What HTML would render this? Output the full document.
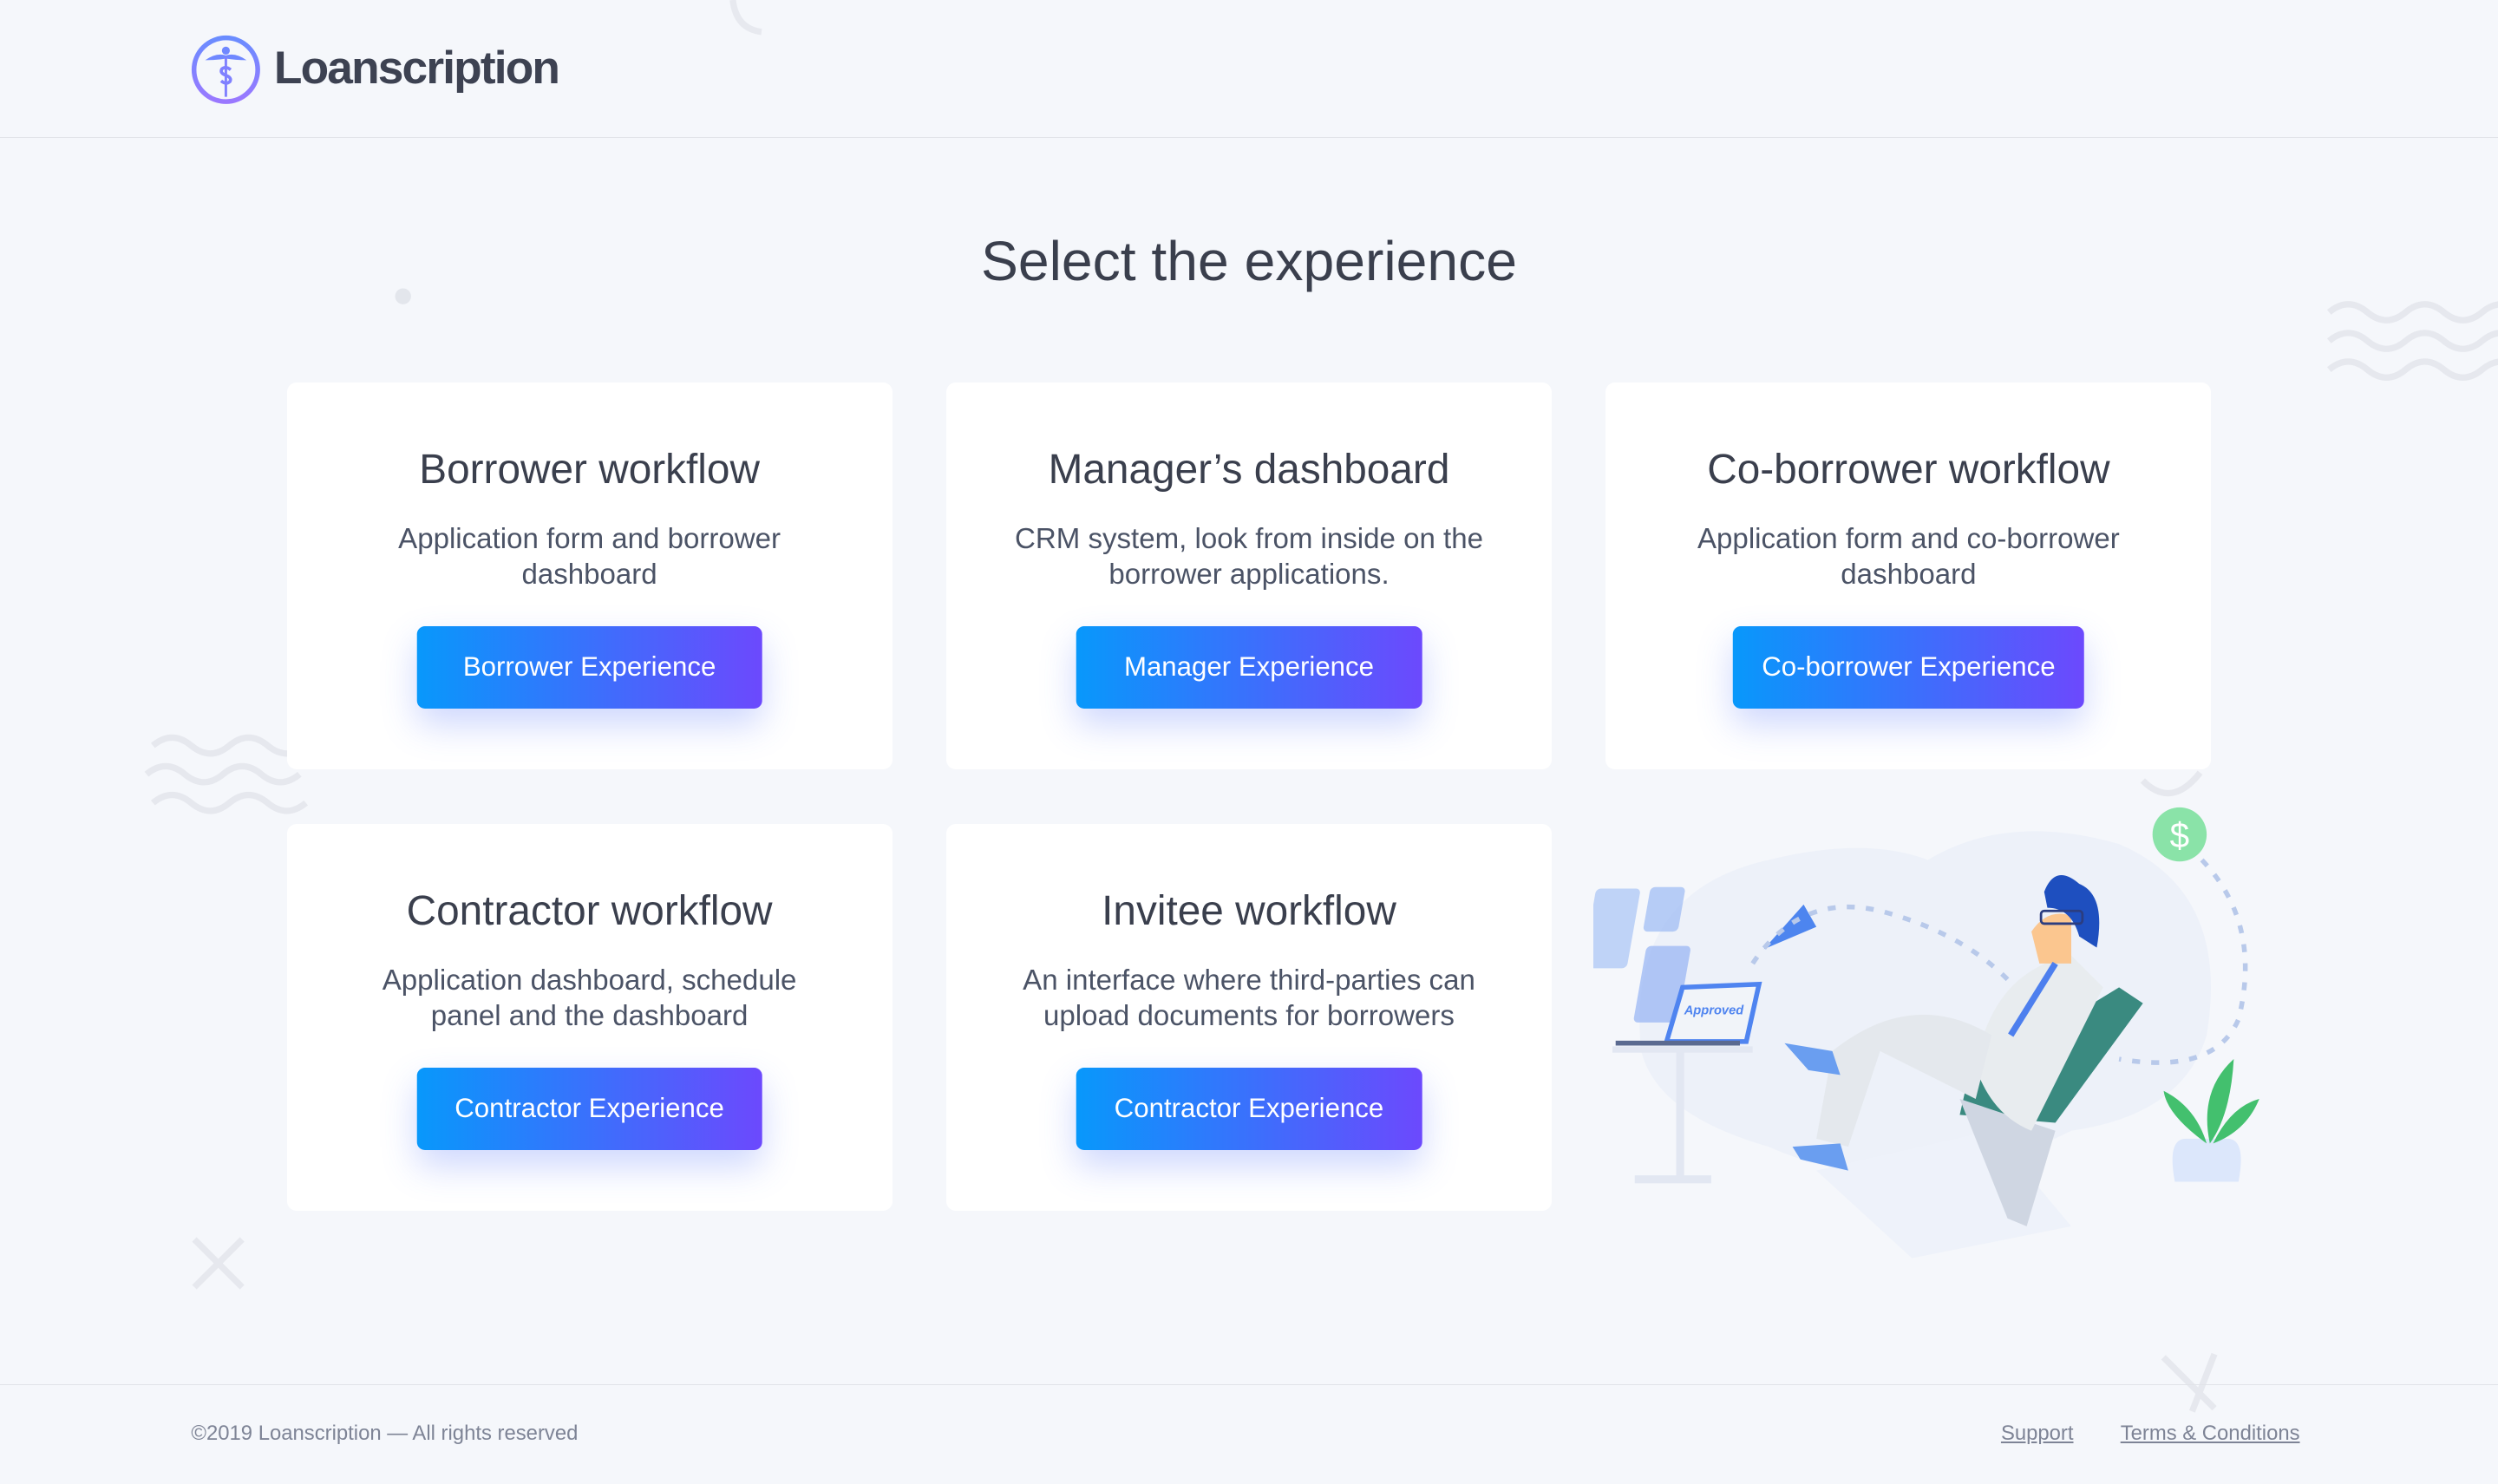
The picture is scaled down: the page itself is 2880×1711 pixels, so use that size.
<!DOCTYPE html>
<html><head><meta charset="utf-8"><style>
html,body{margin:0;padding:0;}
body{width:1568px;height:931px;zoom:1.836735;background:#f5f7fb;font-family:"Liberation Sans",sans-serif;position:relative;overflow:hidden;color:#3d4252;}
.hdr{position:absolute;left:0;top:0;width:1568px;height:86px;border-bottom:1px solid #e1e3e8;}
.logo{position:absolute;left:120px;top:22px;}
.logotext{position:absolute;left:172px;top:26px;font-size:29px;font-weight:bold;color:#3d4252;letter-spacing:-1px;}
h1{position:absolute;left:0;width:1568px;top:144px;margin:0;text-align:center;font-weight:normal;font-size:35px;color:#3a3f4d;}
.card{position:absolute;width:380px;height:243px;background:#fff;border-radius:6px;text-align:center;}
.card .t{position:absolute;top:40px;left:0;right:0;font-size:26px;color:#3a3f4d;}
.card .d{position:absolute;top:88px;left:50px;right:50px;font-size:18px;line-height:22px;color:#4b5366;}
.btn{position:absolute;top:153px;left:50%;transform:translateX(-50%);height:52px;min-width:217px;box-sizing:border-box;padding:0 18px;line-height:51px;border-radius:5px;background:linear-gradient(90deg,#0898fb,#6c49fd);color:#fff;font-size:17px;white-space:nowrap;box-shadow:0 10px 22px rgba(80,110,250,.28);}
.ftr{position:absolute;left:0;top:869px;width:1568px;border-top:1px solid #e1e3e8;height:62px;font-size:13px;color:#7e8496;}
.ftr a{color:#7e8496;text-decoration:underline;position:absolute;top:23px;}
</style></head><body>
<div class="hdr">
<svg class="logo" width="44" height="44" viewBox="0 0 44 44"><defs><linearGradient id="lg" x1="0" y1="0" x2="0" y2="1"><stop offset="0" stop-color="#6a8cff"/><stop offset="1" stop-color="#9a78ff"/></linearGradient></defs>
<circle cx="22" cy="22" r="20" fill="none" stroke="url(#lg)" stroke-width="3"/>
<circle cx="22" cy="10" r="2.5" fill="#7088ff"/><path d="M9 16 Q16 11 22 13 Q28 11 35 16 Q28 16 22 15 Q16 16 9 16Z" fill="#7088ff"/>
<path d="M25 22 Q22 19.5 19.5 21.5 Q18 24 22 25.5 Q26 27 24.5 29.5 Q22 31.5 19 29" fill="none" stroke="#7f80ff" stroke-width="2"/><path d="M22 14v25" stroke="#7f80ff" stroke-width="1.6"/></svg>
<div class="logotext">Loanscription</div>
</div>
<svg style="position:absolute;left:0;top:0" width="1568" height="931">
<path d="M460 0 Q462 18 478 20" fill="none" stroke="#e7e9ef" stroke-width="4"/>
<circle cx="253" cy="186" r="5" fill="#e3e6ec"/>
<g fill="none" stroke="#e6e8ee" stroke-width="4"><path d="M1462 196q12-10 24 0t24 0t24 0t24 0t24 0"/><path d="M1462 214q12-10 24 0t24 0t24 0t24 0t24 0"/><path d="M1462 232q12-10 24 0t24 0t24 0t24 0t24 0"/>
<path d="M96 468q12-10 24 0t24 0t24 0t24 0"/><path d="M92 486q12-10 24 0t24 0t24 0t24 0"/><path d="M96 504q12-10 24 0t24 0t24 0t24 0"/>
<path d="M122 778l30 30M152 778l-30 30"/><path d="M1358 852l32 32M1390 850l-14 36"/><path d="M1345 490q18 18 36-5"/></g>
</svg>
<h1>Select the experience</h1>
<div class="card" style="left:180px;top:240px"><div class="t">Borrower workflow</div><div class="d">Application form and borrower dashboard</div><div class="btn">Borrower Experience</div></div>
<div class="card" style="left:594px;top:240px"><div class="t">Manager’s dashboard</div><div class="d" style="left:30px;right:30px">CRM system, look from inside on the borrower applications.</div><div class="btn">Manager Experience</div></div>
<div class="card" style="left:1008px;top:240px"><div class="t">Co-borrower workflow</div><div class="d">Application form and co-borrower dashboard</div><div class="btn">Co-borrower Experience</div></div>
<div class="card" style="left:180px;top:517px"><div class="t">Contractor workflow</div><div class="d">Application dashboard, schedule<br>panel and the dashboard</div><div class="btn">Contractor Experience</div></div>
<div class="card" style="left:594px;top:517px"><div class="t">Invitee workflow</div><div class="d" style="left:40px;right:40px">An interface where third-parties can upload documents for borrowers</div><div class="btn">Contractor Experience</div></div>
<svg style="position:absolute;left:1000px;top:500px" width="430" height="300" viewBox="0 0 430 300">
<path d="M30 160 Q20 60 110 40 Q170 25 210 40 Q260 10 330 30 Q400 60 385 150 Q370 200 300 210 Q200 260 110 220 Q40 200 30 160Z" fill="#edf1f9"/>
<path d="M140 235 L250 210 L300 270 L200 290Z" fill="#eef2fa"/>
<rect x="12" y="58" width="28" height="50" rx="3" fill="#a8c3f5" opacity=".7" transform="skewX(-10)"/>
<rect x="46" y="57" width="22" height="28" rx="3" fill="#9bb9f3" opacity=".7" transform="skewX(-10)"/>
<rect x="50" y="94" width="28" height="48" rx="3" fill="#94b2f3" opacity=".7" transform="skewX(-10)"/>
<path d="M56 120 L104 118 L96 154 L46 154Z" fill="#f1f4f9" stroke="#4f84f0" stroke-width="3"/>
<text x="57" y="137" font-size="8" font-style="italic" font-weight="bold" fill="#4f84f0" font-family="Liberation Sans">Approved</text>
<path d="M14 155 H92" stroke="#5a6a90" stroke-width="3"/>
<rect x="12" y="157" width="88" height="4" fill="#e2e7f2"/><rect x="52" y="160" width="5" height="80" fill="#e2e7f2"/><rect x="26" y="238" width="48" height="5" fill="#e2e7f2"/>
<path d="M132 68 L140 82 L107 96Z" fill="#4d85ef"/>
<path d="M100 105 Q130 60 180 72 Q230 85 260 115" fill="none" stroke="#b8c9ea" stroke-width="3" stroke-dasharray="5 7"/>
<path d="M382 40 Q420 80 405 140 Q390 175 330 165" fill="none" stroke="#b8c9ea" stroke-width="3" stroke-dasharray="5 7"/>
<circle cx="368" cy="24" r="17" fill="#8ae3a8"/><text x="368" y="32" text-anchor="middle" font-size="22" fill="#fff" font-family="Liberation Sans">$</text>
<path d="M235 178 L330 120 L345 130 L290 205 L230 200Z" fill="#3a8a80"/>
<path d="M230 190 L290 210 L272 270 L260 265Z" fill="#cfd6e2"/>
<path d="M240 170 Q250 110 300 100 L320 120 Q300 160 275 210 Q250 200 240 170Z" fill="#e8ecef"/>
<path d="M150 160 Q200 120 250 150 L240 190 Q200 170 180 160 L160 220 L140 215Z" fill="#e4e8ed"/>
<path d="M120 155 L150 160 L155 175 L135 172Z" fill="#6a9ef0"/><path d="M125 220 L155 218 L160 235 L130 228Z" fill="#6a9ef0"/>
<path d="M275 85 Q285 70 300 75 L300 105 L280 105Z" fill="#fbc68f"/>
<path d="M283 60 Q290 42 305 55 Q322 62 316 95 L305 88 Q300 70 285 70Z" fill="#1e4fbf"/>
<rect x="281" y="72" width="26" height="8" rx="2" fill="none" stroke="#2b3d80" stroke-width="1.5"/>
<path d="M262 150 L290 105" stroke="#4d7fee" stroke-width="4"/>
<path d="M365 242 Q360 215 372 215 L398 215 Q410 215 405 242Z" fill="#dce7fb"/>
<path d="M385 218 Q360 200 358 185 Q378 195 385 218Z M387 218 Q380 185 402 165 Q400 200 387 218Z M389 218 Q400 195 418 190 Q410 210 389 218Z" fill="#43c06e"/>
</svg>
<div class="ftr">
<span style="position:absolute;left:120px;top:23px">©2019 Loanscription — All rights reserved</span>
<a style="left:1256px">Support</a><a style="left:1331px">Terms &amp; Conditions</a>
</div>
</body></html>
